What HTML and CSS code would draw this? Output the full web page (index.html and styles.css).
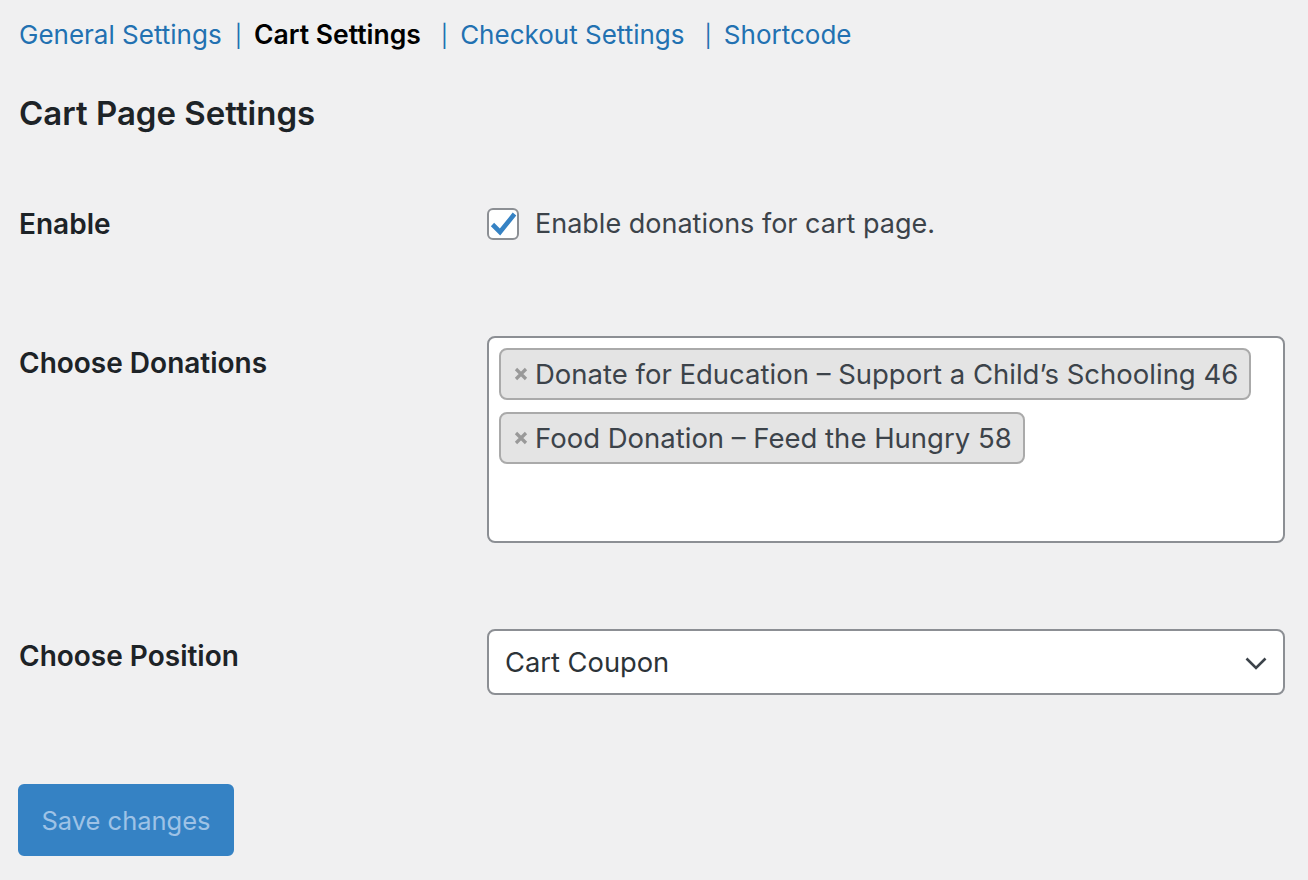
FILE: index.html
```html
<!DOCTYPE html>
<html lang="en">
<head>
<meta charset="utf-8">
<title>Cart Settings</title>
<link rel="stylesheet" href="styles.css">
</head>
<body>
<div class="wrap">
  <nav class="tabs">
    <a class="tab" href="#">General Settings</a>
    <span class="sep">|</span>
    <span class="tab current">Cart Settings</span>
    <span class="sep wide">|</span>
    <a class="tab" href="#">Checkout Settings</a>
    <span class="sep wide">|</span>
    <a class="tab" href="#">Shortcode</a>
  </nav>

  <h2 class="title">Cart Page Settings</h2>

  <div class="form">
    <div class="row row-enable">
      <div class="label">Enable</div>
      <div class="field">
        <label class="check">
          <span class="box">
            <svg viewBox="0 0 28 28" width="28" height="28"><path d="M3.5 14.5L11 22L25.5 4" fill="none" stroke="#3582c4" stroke-width="4.6"/></svg>
          </span>
          <span class="check-text">Enable donations for cart page.</span>
        </label>
      </div>
    </div>

    <div class="row row-donations">
      <div class="label">Choose Donations</div>
      <div class="field">
        <div class="multi">
          <span class="chip"><svg class="x" viewBox="0 0 14 14" width="14" height="14"><path d="M2 2L12 12M12 2L2 12" stroke="#999" stroke-width="3.2"/></svg>Donate for Education – Support a Child’s Schooling 46</span>
          <span class="chip"><svg class="x" viewBox="0 0 14 14" width="14" height="14"><path d="M2 2L12 12M12 2L2 12" stroke="#999" stroke-width="3.2"/></svg>Food Donation – Feed the Hungry 58</span>
        </div>
      </div>
    </div>

    <div class="row row-position">
      <div class="label">Choose Position</div>
      <div class="field">
        <div class="select">
          <span class="select-text">Cart Coupon</span>
          <svg class="chev" viewBox="0 0 22 13" width="22" height="13"><path d="M1.5 1.5l9.5 9.5 9.5-9.5" fill="none" stroke="#3c434a" stroke-width="2.6"/></svg>
        </div>
      </div>
    </div>
  </div>

  <button class="save" type="button">Save changes</button>
</div>
</body>
</html>
```

FILE: styles.css
```css
html, body {
  margin: 0;
  padding: 0;
  background: #f0f0f1;
}
body {
  font-family: Inter, "Noto Sans", "Liberation Sans", sans-serif;
  color: #3c434a;
  width: 1308px;
  height: 880px;
  overflow: hidden;
}
.wrap {
  padding: 16px 23px 0 19px;
}
.tabs {
  display: flex;
  align-items: baseline;
  height: 37px;
  font-size: 26px;
  line-height: 36px;
}
.tab {
  color: #2271b1;
  text-decoration: none;
}
.tab.current {
  color: #000;
  font-size: 26.5px;
  font-weight: 600;
}
.sep {
  font-size: 22px;
  color: #2271b1;
  margin: 0 12px 0 13px;
}
.sep.wide {
  margin-left: 20px;
}
.title {
  margin: 40px 0 0;
  font-size: 33px;
  line-height: 40px;
  font-weight: 600;
  color: #1d2327;
}
.form {
  display: flex;
  flex-direction: column;
}
.row {
  display: grid;
  grid-template-columns: 468px 1fr;
  align-items: start;
}
.label {
  font-size: 28px;
  line-height: 34px;
  font-weight: 600;
  color: #1d2327;
  padding-top: 10px;
}
.row-enable {
  margin-top: 74px;
  align-items: center;
}
.row-enable .label {
  padding-top: 0;
}
.row-donations {
  margin-top: 95px;
}
.row-position {
  margin-top: 86px;
}
.check {
  display: flex;
  align-items: center;
  gap: 16px;
}
.box {
  box-sizing: border-box;
  width: 32px;
  height: 32px;
  border: 2px solid #8c8f94;
  border-radius: 6px;
  background: #fff;
  display: flex;
  align-items: center;
  justify-content: center;
}
.box svg {
  display: block;
  flex: none;
}
.check-text {
  font-size: 27px;
  line-height: 34px;
  color: #3c434a;
}
.multi {
  box-sizing: border-box;
  min-height: 207px;
  background: #fff;
  border: 2px solid #8c8f94;
  border-radius: 8px;
  padding: 10px;
  display: flex;
  flex-direction: column;
  align-items: flex-start;
  gap: 12px;
}
.chip {
  box-sizing: border-box;
  height: 52px;
  display: inline-flex;
  align-items: center;
  background: #e4e4e4;
  border: 2px solid #aaa;
  border-radius: 8px;
  padding: 0 11px 0 13px;
  font-size: 27.5px;
  color: #3c434a;
}
.x {
  display: block;
  flex: none;
  margin-right: 7px;
}
.select {
  box-sizing: border-box;
  height: 66px;
  background: #fff;
  border: 2px solid #8c8f94;
  border-radius: 8px;
  display: flex;
  align-items: center;
  justify-content: space-between;
  padding: 0 16px 0 16px;
}
.select-text {
  font-size: 27.3px;
  color: #2c3338;
}
.chev {
  display: block;
  margin-top: 2px;
}
.save {
  margin-top: 89px;
  width: 216px;
  height: 72px;
  margin-left: -1px;
  background: #3582c4;
  border: 2px solid #3582c4;
  border-radius: 6px;
  color: #9ec2e6;
  font-family: inherit;
  font-size: 25.5px;
  padding: 0;
}
```
